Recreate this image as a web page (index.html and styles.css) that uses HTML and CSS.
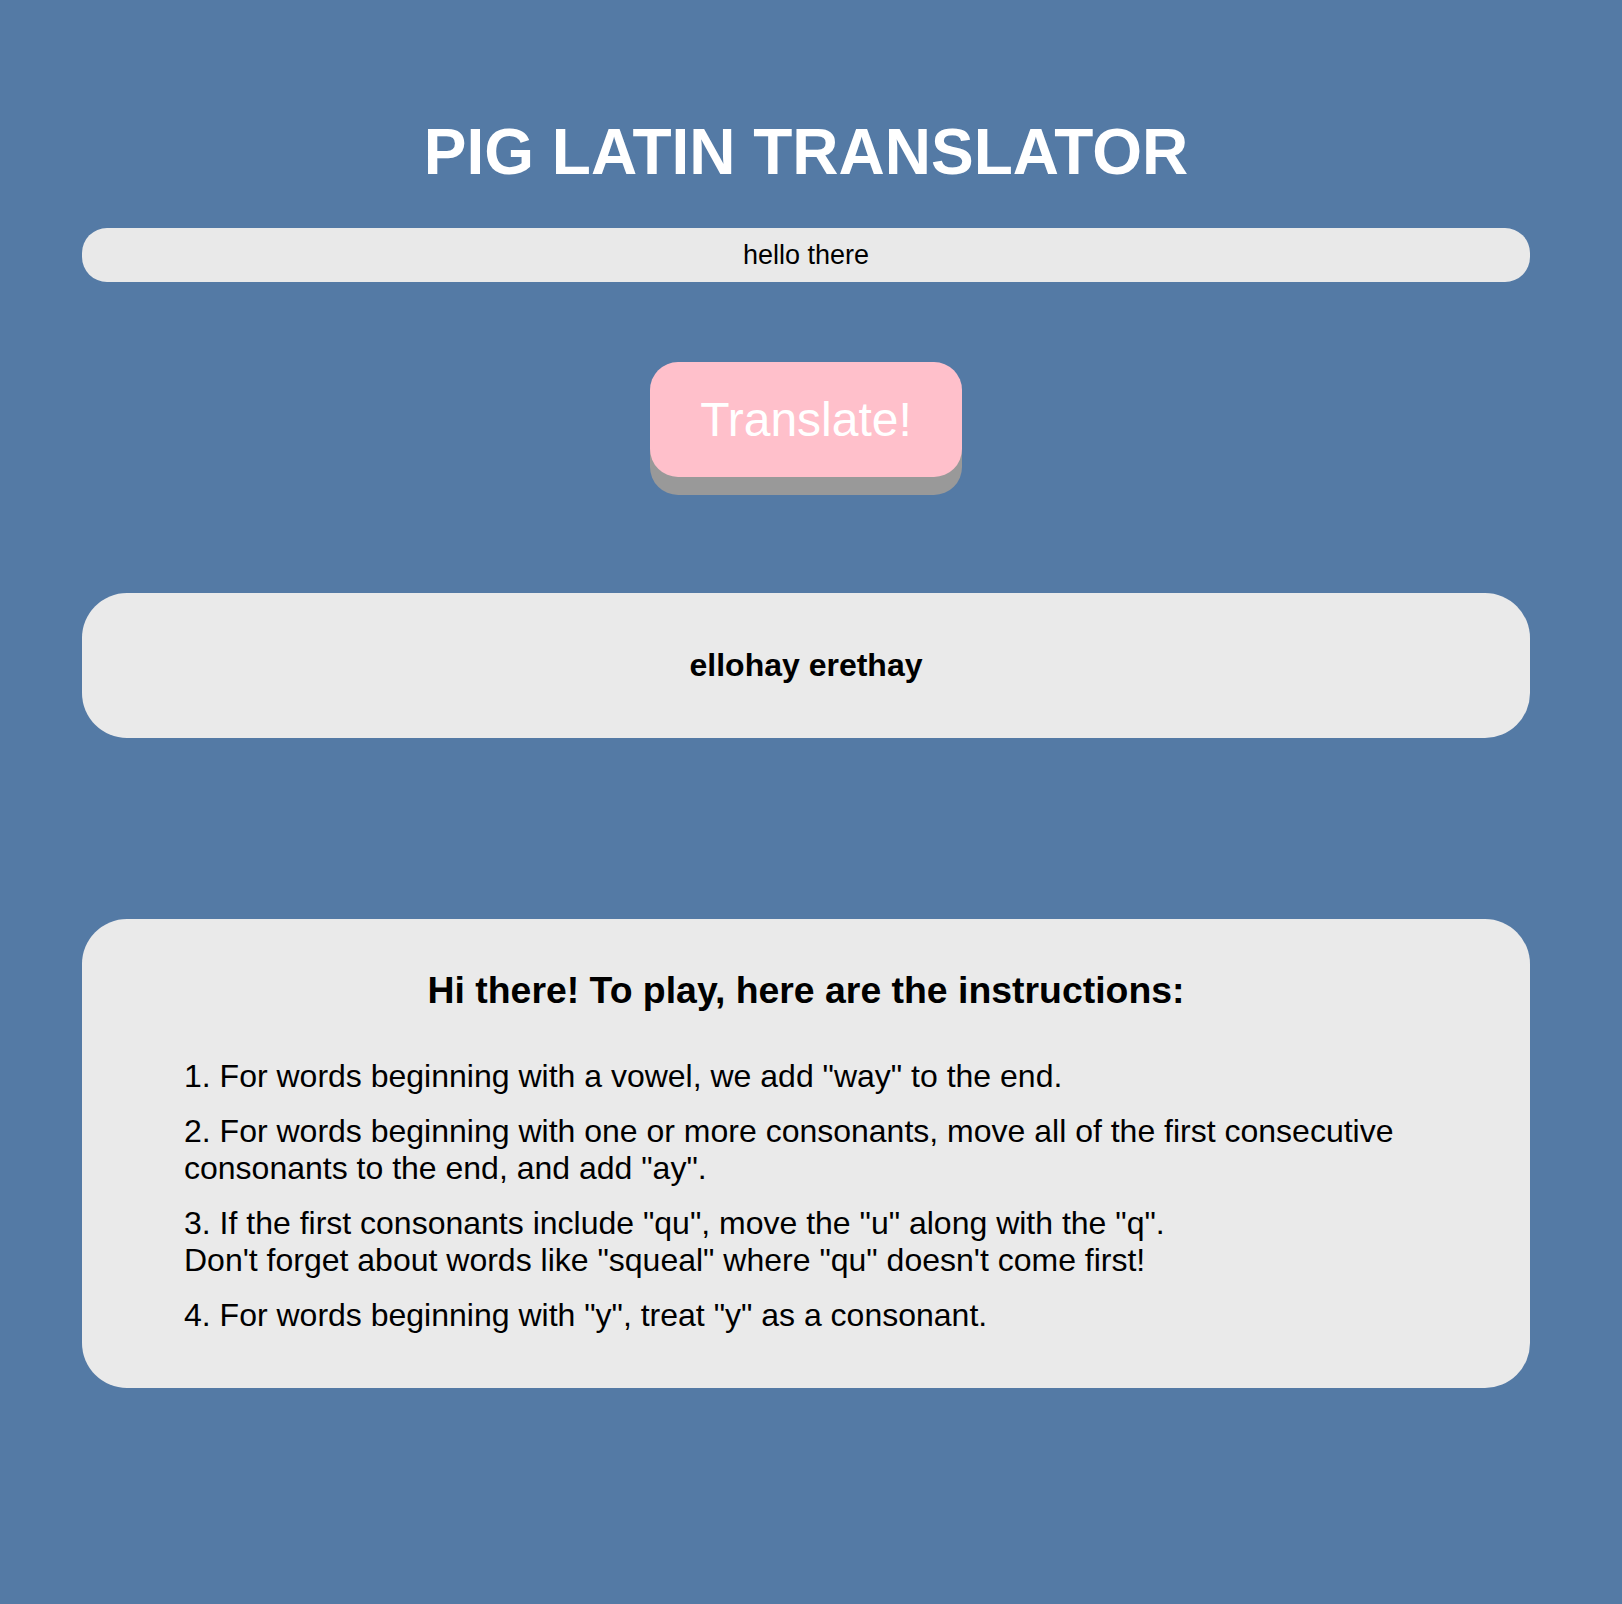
FILE: index.html
```html
<!DOCTYPE html>
<html lang="en">
<head>
<meta charset="utf-8">
<title>Pig Latin Translator</title>
<link rel="stylesheet" href="styles.css">
</head>
<body>
<main class="page">
  <h1 class="title">PIG LATIN TRANSLATOR</h1>
  <input class="phrase" type="text" value="hello there" aria-label="Phrase to translate">
  <button class="translate" type="button">Translate!</button>
  <section class="result">
    <p class="result-text">ellohay erethay</p>
  </section>
  <section class="instructions">
    <h2 class="instructions-title">Hi there! To play, here are the instructions:</h2>
    <ol class="rules">
      <li>For words beginning with a vowel, we add "way" to the end.</li>
      <li>For words beginning with one or more consonants, move all of the first consecutive consonants to the end, and add "ay".</li>
      <li>If the first consonants include "qu", move the "u" along with the "q".<br>Don't forget about words like "squeal" where "qu" doesn't come first!</li>
      <li>For words beginning with "y", treat "y" as a consonant.</li>
    </ol>
  </section>
</main>
</body>
</html>
```

FILE: styles.css
```css
* {
  box-sizing: border-box;
}

html,
body {
  background: #547aa5;
}

body {
  margin: 0;
  font-family: "Liberation Sans", Arial, Helvetica, sans-serif;
  color: #000;
}

.page {
  width: 1612px;
  padding: 115px 0 120px;
  display: flex;
  flex-direction: column;
  align-items: center;
}

.title {
  margin: 0;
  font-size: 64px;
  font-weight: 700;
  line-height: normal;
  color: #fff;
}

.phrase {
  margin-top: 39px;
  width: 1448px;
  height: 54px;
  padding: 0;
  border: 0;
  border-radius: 25px;
  background: #e9e9e9;
  color: #000;
  text-align: center;
  font-family: "Liberation Sans", Arial, Helvetica, sans-serif;
  font-size: 27px;
  outline: none;
}

.translate {
  margin-top: 80px;
  width: 312px;
  height: 115px;
  padding: 0;
  border: 0;
  border-radius: 28px;
  background: #ffc0cb;
  color: #fff;
  font-family: "Liberation Sans", Arial, Helvetica, sans-serif;
  font-size: 48px;
  box-shadow: 0 18px 0 #999999;
  cursor: pointer;
}

.result {
  margin-top: 116px;
  width: 1448px;
  padding: 54px 0;
  border-radius: 45px;
  background: #eaeaea;
  text-align: center;
}

.result-text {
  margin: 0;
  font-size: 32px;
  font-weight: 700;
  line-height: normal;
}

.instructions {
  margin-top: 181px;
  width: 1448px;
  padding: 50px 102px 54px;
  border-radius: 45px;
  background: #eaeaea;
}

.instructions-title {
  margin: 0 0 46px;
  font-size: 37.4px;
  font-weight: 700;
  line-height: normal;
  text-align: center;
}

.rules {
  margin: 0;
  padding: 0;
  list-style: decimal inside;
  font-size: 32px;
  line-height: normal;
}

.rules li {
  margin-bottom: 18px;
}

.rules li:last-child {
  margin-bottom: 0;
}
```
